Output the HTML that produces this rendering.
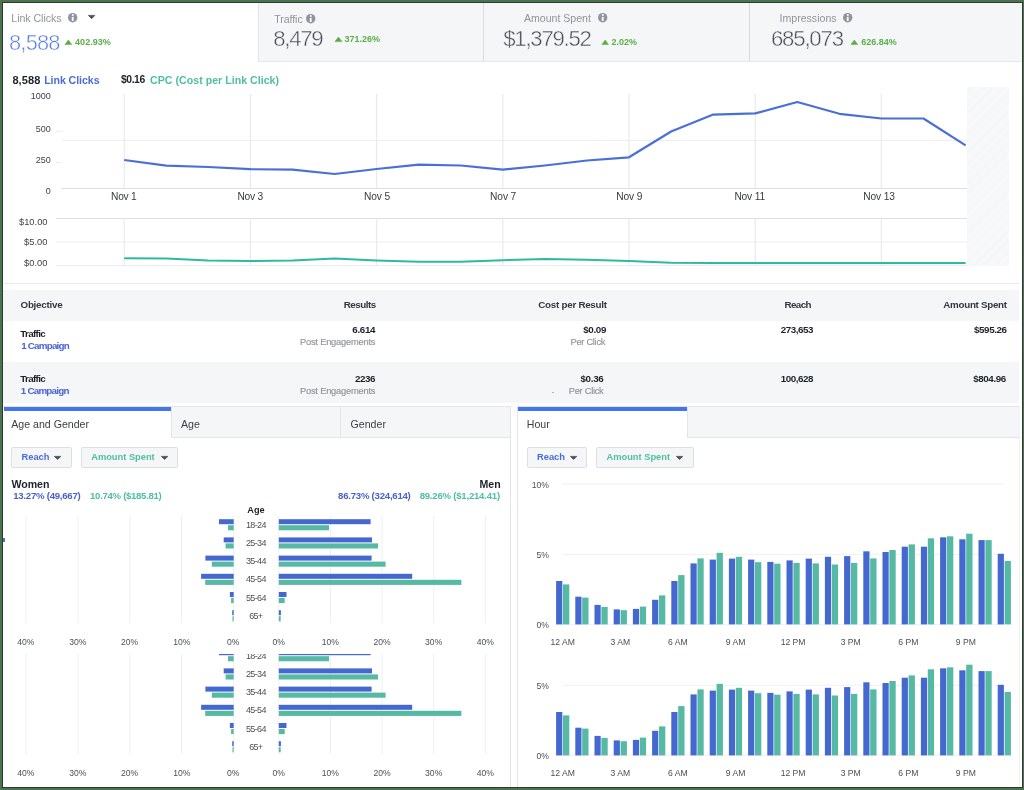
<!DOCTYPE html>
<html><head><meta charset="utf-8"><style>
html,body{margin:0;padding:0;}
body{will-change:transform;width:1024px;height:790px;position:relative;overflow:hidden;background:#4a754c;font-family:"Liberation Sans",sans-serif;}
.t{position:absolute;white-space:nowrap;}
.r{position:absolute;}
</style></head><body>
<div class="r" style="left:2.00px;top:2.00px;width:1021.00px;height:786.00px;background:#353535;"></div>
<div class="r" style="left:3.00px;top:3.00px;width:1019.00px;height:784.00px;background:#ffffff;"></div>
<div class="r" style="left:258.00px;top:3.00px;width:764.00px;height:59.00px;background:#f5f6f7;"></div>
<div class="r" style="left:258.00px;top:3.00px;width:1.00px;height:59.00px;background:#e3e5e8;"></div>
<div class="r" style="left:483.00px;top:3.00px;width:1.00px;height:59.00px;background:#dadcdf;"></div>
<div class="r" style="left:749.00px;top:3.00px;width:1.00px;height:59.00px;background:#d6d8db;"></div>
<div class="r" style="left:258.00px;top:61.00px;width:764.00px;height:1.00px;background:#e6e8eb;"></div>
<div class="t" style="left:11.30px;top:12.73px;font-size:10.6px;line-height:10.6px;color:#90949c;letter-spacing:-0.036px;">Link Clicks</div>
<svg class="r" style="left:66.60px;top:12.10px" width="11.40" height="11.40" viewBox="-5.70 -5.70 11.40 11.40"><circle cx="0" cy="0" r="4.70" fill="#8f959e"/><path d="M-0.9,-0.6 L0.9,-0.9 L0.9,3.2 L-0.9,3.2 Z" fill="#fff"/><circle cx="0.1" cy="-2.6" r="1.0" fill="#fff"/></svg>
<svg class="r" style="left:87.20px;top:14.00px" width="9.20" height="6.10"><polygon points="1.4,1.4 7.80,1.4 4.60,4.70" fill="#4b4f56" stroke="#4b4f56" stroke-width="0.8" stroke-linejoin="round"/></svg>
<div class="t" style="left:9.00px;top:31.75px;font-size:21.8px;line-height:21.8px;color:#5a7fe0;letter-spacing:-0.764px;-webkit-text-stroke:0.45px #fff;">8,588</div>
<svg class="r" style="left:63.50px;top:38.80px" width="8.70" height="6.60"><polygon points="1,5.60 7.70,5.60 4.35,1" fill="#5aae48" stroke="#5aae48" stroke-width="0.6" stroke-linejoin="round"/></svg>
<div class="t" style="left:75.10px;top:37.78px;font-size:9px;line-height:9px;color:#5aae48;font-weight:bold;letter-spacing:0.012px;">402.93%</div>
<div class="t" style="left:274.30px;top:13.83px;font-size:10.6px;line-height:10.6px;color:#90949c;letter-spacing:-0.077px;">Traffic</div>
<svg class="r" style="left:304.70px;top:13.10px" width="11.40" height="11.40" viewBox="-5.70 -5.70 11.40 11.40"><circle cx="0" cy="0" r="4.70" fill="#8f959e"/><path d="M-0.9,-0.6 L0.9,-0.9 L0.9,3.2 L-0.9,3.2 Z" fill="#fff"/><circle cx="0.1" cy="-2.6" r="1.0" fill="#fff"/></svg>
<div class="t" style="left:273.20px;top:27.81px;font-size:22.2px;line-height:22.2px;color:#4b4f56;letter-spacing:-1.264px;-webkit-text-stroke:0.45px #f5f6f7;">8,479</div>
<svg class="r" style="left:334.00px;top:36.00px" width="8.90" height="6.60"><polygon points="1,5.60 7.90,5.60 4.45,1" fill="#5aae48" stroke="#5aae48" stroke-width="0.6" stroke-linejoin="round"/></svg>
<div class="t" style="left:344.40px;top:34.88px;font-size:9px;line-height:9px;color:#5aae48;font-weight:bold;letter-spacing:0.012px;">371.26%</div>
<div class="t" style="left:523.90px;top:12.93px;font-size:10.6px;line-height:10.6px;color:#90949c;letter-spacing:-0.007px;">Amount Spent</div>
<svg class="r" style="left:596.80px;top:12.30px" width="11.40" height="11.40" viewBox="-5.70 -5.70 11.40 11.40"><circle cx="0" cy="0" r="4.70" fill="#8f959e"/><path d="M-0.9,-0.6 L0.9,-0.9 L0.9,3.2 L-0.9,3.2 Z" fill="#fff"/><circle cx="0.1" cy="-2.6" r="1.0" fill="#fff"/></svg>
<div class="t" style="left:503.30px;top:27.81px;font-size:22.2px;line-height:22.2px;color:#4b4f56;letter-spacing:-1.270px;-webkit-text-stroke:0.45px #f5f6f7;">$1,379.52</div>
<svg class="r" style="left:601.00px;top:38.60px" width="8.40" height="6.40"><polygon points="1,5.40 7.40,5.40 4.20,1" fill="#5aae48" stroke="#5aae48" stroke-width="0.6" stroke-linejoin="round"/></svg>
<div class="t" style="left:611.40px;top:38.38px;font-size:9px;line-height:9px;color:#5aae48;font-weight:bold;letter-spacing:-0.005px;">2.02%</div>
<div class="t" style="left:779.50px;top:12.93px;font-size:10.6px;line-height:10.6px;color:#90949c;letter-spacing:-0.004px;">Impressions</div>
<svg class="r" style="left:841.80px;top:12.30px" width="11.40" height="11.40" viewBox="-5.70 -5.70 11.40 11.40"><circle cx="0" cy="0" r="4.70" fill="#8f959e"/><path d="M-0.9,-0.6 L0.9,-0.9 L0.9,3.2 L-0.9,3.2 Z" fill="#fff"/><circle cx="0.1" cy="-2.6" r="1.0" fill="#fff"/></svg>
<div class="t" style="left:770.90px;top:27.81px;font-size:22.2px;line-height:22.2px;color:#4b4f56;letter-spacing:-1.175px;-webkit-text-stroke:0.45px #f5f6f7;">685,073</div>
<svg class="r" style="left:850.00px;top:38.60px" width="8.70" height="6.40"><polygon points="1,5.40 7.70,5.40 4.35,1" fill="#5aae48" stroke="#5aae48" stroke-width="0.6" stroke-linejoin="round"/></svg>
<div class="t" style="left:861.25px;top:38.38px;font-size:9px;line-height:9px;color:#5aae48;font-weight:bold;letter-spacing:-0.013px;">626.84%</div>
<div class="t" style="left:12.40px;top:74.69px;font-size:11px;line-height:11px;color:#1d2129;font-weight:bold;letter-spacing:0.093px;">8,588</div>
<div class="t" style="left:44.20px;top:75.03px;font-size:10.6px;line-height:10.6px;color:#4a6cd8;font-weight:bold;letter-spacing:-0.057px;">Link Clicks</div>
<div class="t" style="left:120.90px;top:75.20px;font-size:10.4px;line-height:10.4px;color:#1d2129;font-weight:bold;letter-spacing:-0.407px;">$0.16</div>
<div class="t" style="left:150.10px;top:75.03px;font-size:10.6px;line-height:10.6px;color:#4fbf9f;font-weight:bold;letter-spacing:0.025px;">CPC (Cost per Link Click)</div>
<svg class="r" style="left:0;top:0" width="1024" height="290"><line x1="56" y1="131.5" x2="61.5" y2="131.5" stroke="#e8ebef" stroke-width="1"/><line x1="56" y1="162.5" x2="61.5" y2="162.5" stroke="#e8ebef" stroke-width="1"/><line x1="62" y1="140.5" x2="967" y2="140.5" stroke="#eceef0" stroke-width="1"/><line x1="62" y1="188.5" x2="967" y2="188.5" stroke="#dcdee1" stroke-width="1"/><line x1="124.2" y1="94" x2="124.2" y2="188" stroke="#e9ebee" stroke-width="1.3"/><line x1="250.4" y1="94" x2="250.4" y2="188" stroke="#e9ebee" stroke-width="1.3"/><line x1="376.6" y1="94" x2="376.6" y2="188" stroke="#e9ebee" stroke-width="1.3"/><line x1="502.8" y1="94" x2="502.8" y2="188" stroke="#e9ebee" stroke-width="1.3"/><line x1="629.0" y1="94" x2="629.0" y2="188" stroke="#e9ebee" stroke-width="1.3"/><line x1="755.2" y1="94" x2="755.2" y2="188" stroke="#e9ebee" stroke-width="1.3"/><line x1="881.4" y1="94" x2="881.4" y2="188" stroke="#e9ebee" stroke-width="1.3"/><line x1="56" y1="218.5" x2="967" y2="218.5" stroke="#dcdee1" stroke-width="1"/><line x1="56" y1="242.0" x2="967" y2="242.0" stroke="#eceef0" stroke-width="1"/><line x1="56" y1="265.5" x2="967" y2="265.5" stroke="#eceef0" stroke-width="1"/><line x1="124.2" y1="218" x2="124.2" y2="265" stroke="#e9ebee" stroke-width="1.3"/><line x1="250.4" y1="218" x2="250.4" y2="265" stroke="#e9ebee" stroke-width="1.3"/><line x1="376.6" y1="218" x2="376.6" y2="265" stroke="#e9ebee" stroke-width="1.3"/><line x1="502.8" y1="218" x2="502.8" y2="265" stroke="#e9ebee" stroke-width="1.3"/><line x1="629.0" y1="218" x2="629.0" y2="265" stroke="#e9ebee" stroke-width="1.3"/><line x1="755.2" y1="218" x2="755.2" y2="265" stroke="#e9ebee" stroke-width="1.3"/><line x1="881.4" y1="218" x2="881.4" y2="265" stroke="#e9ebee" stroke-width="1.3"/><defs><pattern id="hp" patternUnits="userSpaceOnUse" width="7" height="7" patternTransform="rotate(45)"><rect width="7" height="7" fill="#f7f8f9"/><rect width="2.5" height="7" fill="#f5f6f8"/></pattern></defs><rect x="967" y="87" width="42" height="179" fill="url(#hp)"/><polyline points="124.2,160.0 166.3,165.6 208.3,167.0 250.4,169.2 292.5,169.7 334.6,174.0 376.6,169.0 418.7,164.7 460.8,165.5 502.8,169.6 544.9,165.5 587.0,160.5 629.0,157.3 671.1,131.5 713.2,114.6 755.2,113.4 797.3,102.0 839.4,113.8 881.5,118.5 923.5,118.5 965.6,145.4" fill="none" stroke="#4a6fd8" stroke-width="2.2" stroke-linejoin="round"/><polyline points="124.2,258.2 166.3,258.6 208.3,260.6 250.4,261.0 292.5,260.5 334.6,258.6 376.6,260.5 418.7,261.8 460.8,261.8 502.8,260.2 544.9,259.0 587.0,259.8 629.0,261.0 671.1,262.8 713.2,263.0 755.2,263.0 797.3,263.0 839.4,263.0 881.5,263.0 923.5,263.0 965.6,263.0" fill="none" stroke="#2fb9a0" stroke-width="2" stroke-linejoin="round"/></svg>
<div class="t" style="right:973.20px;top:91.58px;font-size:9px;line-height:9px;color:#3f4248;">1000</div>
<div class="t" style="right:973.20px;top:124.98px;font-size:9px;line-height:9px;color:#3f4248;">500</div>
<div class="t" style="right:973.20px;top:156.28px;font-size:9px;line-height:9px;color:#3f4248;">250</div>
<div class="t" style="right:973.20px;top:186.68px;font-size:9px;line-height:9px;color:#3f4248;">0</div>
<div class="t" style="left:111.00px;top:191.87px;font-size:10.2px;line-height:10.2px;color:#383b41;letter-spacing:-0.211px;">Nov 1</div>
<div class="t" style="left:237.40px;top:191.87px;font-size:10.2px;line-height:10.2px;color:#383b41;letter-spacing:-0.186px;">Nov 3</div>
<div class="t" style="left:364.00px;top:191.87px;font-size:10.2px;line-height:10.2px;color:#383b41;letter-spacing:-0.136px;">Nov 5</div>
<div class="t" style="left:490.10px;top:191.87px;font-size:10.2px;line-height:10.2px;color:#383b41;letter-spacing:-0.111px;">Nov 7</div>
<div class="t" style="left:616.30px;top:191.87px;font-size:10.2px;line-height:10.2px;color:#383b41;letter-spacing:-0.111px;">Nov 9</div>
<div class="t" style="left:734.40px;top:191.87px;font-size:10.2px;line-height:10.2px;color:#383b41;letter-spacing:-0.152px;">Nov 11</div>
<div class="t" style="left:863.30px;top:191.87px;font-size:10.2px;line-height:10.2px;color:#383b41;letter-spacing:-0.144px;">Nov 13</div>
<div class="t" style="right:976.49px;top:218.13px;font-size:9.3px;line-height:9.3px;color:#3f4248;letter-spacing:0.011px;">$10.00</div>
<div class="t" style="right:976.44px;top:238.23px;font-size:9.3px;line-height:9.3px;color:#3f4248;letter-spacing:0.057px;">$5.00</div>
<div class="t" style="right:976.44px;top:258.53px;font-size:9.3px;line-height:9.3px;color:#3f4248;letter-spacing:0.057px;">$0.00</div>
<div class="r" style="left:3.00px;top:283.00px;width:1016.00px;height:1.00px;background:#e9ebee;"></div>
<div class="r" style="left:3.00px;top:289.50px;width:1016.00px;height:31.00px;background:#f5f6f7;"></div>
<div class="r" style="left:3.00px;top:362.40px;width:1016.00px;height:40.60px;background:#f5f6f7;"></div>
<div class="t" style="left:20.50px;top:300.10px;font-size:9.8px;line-height:9.8px;color:#34373c;font-weight:bold;letter-spacing:-0.240px;">Objective</div>
<div class="t" style="right:648.17px;top:300.10px;font-size:9.8px;line-height:9.8px;color:#34373c;font-weight:bold;letter-spacing:-0.467px;">Results</div>
<div class="t" style="right:417.27px;top:300.10px;font-size:9.8px;line-height:9.8px;color:#34373c;font-weight:bold;letter-spacing:-0.266px;">Cost per Result</div>
<div class="t" style="right:213.08px;top:300.10px;font-size:9.8px;line-height:9.8px;color:#34373c;font-weight:bold;letter-spacing:-0.579px;">Reach</div>
<div class="t" style="right:17.30px;top:300.10px;font-size:9.8px;line-height:9.8px;color:#34373c;font-weight:bold;letter-spacing:-0.296px;">Amount Spent</div>
<div class="t" style="left:20.30px;top:328.60px;font-size:9.8px;line-height:9.8px;color:#1d2129;font-weight:bold;letter-spacing:-0.668px;">Traffic</div>
<div class="t" style="left:21.20px;top:340.70px;font-size:9.8px;line-height:9.8px;color:#4b63d3;font-weight:bold;letter-spacing:-0.772px;">1 Campaign</div>
<div class="t" style="right:648.83px;top:324.80px;font-size:9.8px;line-height:9.8px;color:#1d2129;font-weight:bold;letter-spacing:-0.331px;">6.614</div>
<div class="t" style="right:648.70px;top:337.63px;font-size:9.3px;line-height:9.3px;color:#90949c;letter-spacing:-0.199px;-webkit-text-stroke:0.15px #90949c;">Post Engagements</div>
<div class="t" style="right:417.93px;top:324.80px;font-size:9.8px;line-height:9.8px;color:#1d2129;font-weight:bold;letter-spacing:-0.331px;">$0.09</div>
<div class="t" style="right:418.89px;top:337.63px;font-size:9.3px;line-height:9.3px;color:#90949c;letter-spacing:-0.288px;-webkit-text-stroke:0.15px #90949c;">Per Click</div>
<div class="t" style="right:210.95px;top:324.80px;font-size:9.8px;line-height:9.8px;color:#1d2129;font-weight:bold;letter-spacing:-0.454px;">273,653</div>
<div class="t" style="right:17.40px;top:324.80px;font-size:9.8px;line-height:9.8px;color:#1d2129;font-weight:bold;letter-spacing:-0.404px;">$595.26</div>
<div class="t" style="left:20.30px;top:374.00px;font-size:9.8px;line-height:9.8px;color:#1d2129;font-weight:bold;letter-spacing:-0.668px;">Traffic</div>
<div class="t" style="left:20.80px;top:386.40px;font-size:9.8px;line-height:9.8px;color:#4b63d3;font-weight:bold;letter-spacing:-0.772px;">1 Campaign</div>
<div class="t" style="right:648.90px;top:374.00px;font-size:9.8px;line-height:9.8px;color:#1d2129;font-weight:bold;letter-spacing:-0.401px;">2236</div>
<div class="t" style="right:648.70px;top:387.13px;font-size:9.3px;line-height:9.3px;color:#90949c;letter-spacing:-0.199px;-webkit-text-stroke:0.15px #90949c;">Post Engagements</div>
<div class="t" style="right:420.63px;top:374.00px;font-size:9.8px;line-height:9.8px;color:#1d2129;font-weight:bold;letter-spacing:-0.331px;">$0.36</div>
<div class="t" style="right:420.59px;top:387.13px;font-size:9.3px;line-height:9.3px;color:#90949c;letter-spacing:-0.288px;-webkit-text-stroke:0.15px #90949c;">Per Click</div>
<div class="t" style="right:210.95px;top:374.00px;font-size:9.8px;line-height:9.8px;color:#1d2129;font-weight:bold;letter-spacing:-0.454px;">100,628</div>
<div class="t" style="right:18.20px;top:374.00px;font-size:9.8px;line-height:9.8px;color:#1d2129;font-weight:bold;letter-spacing:-0.404px;">$804.96</div>
<div class="r" style="left:552.2px;top:391.6px;width:1.6px;height:1.6px;border-radius:50%;background:#a9adb3;"></div>
<div class="r" style="left:3.00px;top:406.00px;width:508.00px;height:381.00px;background:#e2e4e7;"></div>
<div class="r" style="left:3.00px;top:407.00px;width:507.00px;height:380.00px;background:#ffffff;"></div>
<div class="r" style="left:3.00px;top:538.00px;width:2.00px;height:4.00px;background:#4a6fd6;"></div>
<div class="r" style="left:171.00px;top:406.30px;width:340.00px;height:31.50px;background:#e3e5e8;"></div>
<div class="r" style="left:172.00px;top:407.30px;width:338.00px;height:29.50px;background:#f5f6f7;"></div>
<div class="r" style="left:340.00px;top:407.00px;width:1.00px;height:30.00px;background:#e3e5e8;"></div>
<div class="r" style="left:4.00px;top:406.80px;width:167.30px;height:4.70px;background:#4276ec;"></div>
<div class="t" style="left:11.30px;top:419.33px;font-size:10.6px;line-height:10.6px;color:#3b3e44;">Age and Gender</div>
<div class="t" style="left:181.00px;top:419.03px;font-size:10.6px;line-height:10.6px;color:#3b3e44;">Age</div>
<div class="t" style="left:350.60px;top:419.03px;font-size:10.6px;line-height:10.6px;color:#3b3e44;">Gender</div>
<div class="r" style="left:517.00px;top:406.00px;width:503.00px;height:381.00px;background:#e2e4e7;"></div>
<div class="r" style="left:518.00px;top:407.00px;width:501.00px;height:380.00px;background:#ffffff;"></div>
<div class="r" style="left:1019.00px;top:406.00px;width:1.00px;height:381.00px;background:#f0f1f3;"></div>
<div class="r" style="left:687.00px;top:406.30px;width:332.00px;height:31.50px;background:#e3e5e8;"></div>
<div class="r" style="left:688.00px;top:407.30px;width:331.00px;height:29.50px;background:#f5f6f7;"></div>
<div class="r" style="left:517.50px;top:406.80px;width:169.80px;height:4.70px;background:#4276ec;"></div>
<div class="t" style="left:526.80px;top:419.33px;font-size:10.6px;line-height:10.6px;color:#3b3e44;">Hour</div>
<div class="r" style="left:11.30px;top:447px;width:58.60px;height:19px;background:#f5f6f7;border:1px solid #dddfe2;border-radius:2px;"></div>
<div class="t" style="left:21.50px;top:453.43px;font-size:9.3px;line-height:9.3px;color:#4a6cd8;font-weight:bold;">Reach</div>
<svg class="r" style="left:53.30px;top:454.80px" width="9.20" height="5.80"><polygon points="1.4,1.4 7.80,1.4 4.60,4.40" fill="#4b4f56" stroke="#4b4f56" stroke-width="0.8" stroke-linejoin="round"/></svg>
<div class="r" style="left:81.00px;top:447px;width:95.30px;height:19px;background:#f5f6f7;border:1px solid #dddfe2;border-radius:2px;"></div>
<div class="t" style="left:91.20px;top:453.43px;font-size:9.3px;line-height:9.3px;color:#4fbf9f;font-weight:bold;">Amount Spent</div>
<svg class="r" style="left:160.00px;top:454.80px" width="9.20" height="5.80"><polygon points="1.4,1.4 7.80,1.4 4.60,4.40" fill="#4b4f56" stroke="#4b4f56" stroke-width="0.8" stroke-linejoin="round"/></svg>
<div class="r" style="left:526.80px;top:447px;width:58.70px;height:19px;background:#f5f6f7;border:1px solid #dddfe2;border-radius:2px;"></div>
<div class="t" style="left:537.00px;top:453.43px;font-size:9.3px;line-height:9.3px;color:#4a6cd8;font-weight:bold;">Reach</div>
<svg class="r" style="left:568.80px;top:454.80px" width="9.20" height="5.80"><polygon points="1.4,1.4 7.80,1.4 4.60,4.40" fill="#4b4f56" stroke="#4b4f56" stroke-width="0.8" stroke-linejoin="round"/></svg>
<div class="r" style="left:596.30px;top:447px;width:95.30px;height:19px;background:#f5f6f7;border:1px solid #dddfe2;border-radius:2px;"></div>
<div class="t" style="left:606.50px;top:453.43px;font-size:9.3px;line-height:9.3px;color:#4fbf9f;font-weight:bold;">Amount Spent</div>
<svg class="r" style="left:675.30px;top:454.80px" width="9.20" height="5.80"><polygon points="1.4,1.4 7.80,1.4 4.60,4.40" fill="#4b4f56" stroke="#4b4f56" stroke-width="0.8" stroke-linejoin="round"/></svg>
<div class="t" style="left:11.40px;top:478.83px;font-size:10.6px;line-height:10.6px;color:#1d2129;font-weight:bold;">Women</div>
<div class="t" style="left:13.20px;top:491.47px;font-size:9.6px;line-height:9.6px;color:#4a5fc8;font-weight:bold;letter-spacing:-0.242px;">13.27% (49,667)</div>
<div class="t" style="left:90.10px;top:491.47px;font-size:9.6px;line-height:9.6px;color:#4fbf9f;font-weight:bold;letter-spacing:-0.308px;">10.74% ($185.81)</div>
<div class="t" style="right:523.30px;top:478.73px;font-size:10.6px;line-height:10.6px;color:#1d2129;font-weight:bold;">Men</div>
<div class="t" style="right:613.43px;top:491.47px;font-size:9.6px;line-height:9.6px;color:#4a5fc8;font-weight:bold;letter-spacing:-0.235px;">86.73% (324,614)</div>
<div class="t" style="right:524.13px;top:491.47px;font-size:9.6px;line-height:9.6px;color:#4fbf9f;font-weight:bold;letter-spacing:-0.225px;">89.26% ($1,214.41)</div>
<div class="r" style="left:0;top:0;width:1024px;height:654px;overflow:hidden;">
<svg class="r" style="left:0;top:0" width="520" height="790"><rect x="25.50" y="516.00" width="1" height="107" fill="#eef0f2"/><rect x="77.50" y="516.00" width="1" height="107" fill="#eef0f2"/><rect x="129.30" y="516.00" width="1" height="107" fill="#eef0f2"/><rect x="181.10" y="516.00" width="1" height="107" fill="#eef0f2"/><rect x="233.20" y="516.00" width="1" height="107" fill="#eef0f2"/><rect x="278.20" y="516.00" width="1" height="107" fill="#eef0f2"/><rect x="329.90" y="516.00" width="1" height="107" fill="#eef0f2"/><rect x="381.50" y="516.00" width="1" height="107" fill="#eef0f2"/><rect x="433.20" y="516.00" width="1" height="107" fill="#eef0f2"/><rect x="484.90" y="516.00" width="1" height="107" fill="#eef0f2"/><rect x="219.00" y="519.20" width="14.70" height="5.0" fill="#4468d0"/><rect x="228.00" y="525.20" width="5.70" height="5.1" fill="#55b9a3"/><rect x="278.8" y="519.20" width="91.80" height="5.0" fill="#4468d0"/><rect x="278.8" y="525.20" width="50.20" height="5.1" fill="#55b9a3"/><rect x="223.70" y="537.40" width="10.00" height="5.0" fill="#4468d0"/><rect x="225.60" y="543.40" width="8.10" height="5.1" fill="#55b9a3"/><rect x="278.8" y="537.40" width="93.20" height="5.0" fill="#4468d0"/><rect x="278.8" y="543.40" width="99.20" height="5.1" fill="#55b9a3"/><rect x="205.40" y="555.60" width="28.30" height="5.0" fill="#4468d0"/><rect x="211.80" y="561.60" width="21.90" height="5.1" fill="#55b9a3"/><rect x="278.8" y="555.60" width="92.80" height="5.0" fill="#4468d0"/><rect x="278.8" y="561.60" width="106.80" height="5.1" fill="#55b9a3"/><rect x="201.10" y="573.80" width="32.60" height="5.0" fill="#4468d0"/><rect x="205.20" y="579.80" width="28.50" height="5.1" fill="#55b9a3"/><rect x="278.8" y="573.80" width="133.40" height="5.0" fill="#4468d0"/><rect x="278.8" y="579.80" width="182.60" height="5.1" fill="#55b9a3"/><rect x="229.90" y="592.00" width="3.80" height="5.0" fill="#4468d0"/><rect x="231.10" y="598.00" width="2.60" height="5.1" fill="#55b9a3"/><rect x="278.8" y="592.00" width="7.70" height="5.0" fill="#4468d0"/><rect x="278.8" y="598.00" width="5.90" height="5.1" fill="#55b9a3"/><rect x="232.20" y="610.20" width="1.50" height="5.0" fill="#4468d0"/><rect x="232.50" y="616.20" width="1.20" height="5.1" fill="#55b9a3"/><rect x="278.8" y="610.20" width="2.10" height="5.0" fill="#4468d0"/><rect x="278.8" y="616.20" width="1.90" height="5.1" fill="#55b9a3"/></svg>
<div class="t" style="left:215.90px;width:80px;text-align:center;top:520.88px;font-size:9px;line-height:9px;color:#4b4f56;letter-spacing:-0.605px;">18-24</div>
<div class="t" style="left:215.90px;width:80px;text-align:center;top:539.08px;font-size:9px;line-height:9px;color:#4b4f56;letter-spacing:-0.605px;">25-34</div>
<div class="t" style="left:215.90px;width:80px;text-align:center;top:557.28px;font-size:9px;line-height:9px;color:#4b4f56;letter-spacing:-0.605px;">35-44</div>
<div class="t" style="left:215.90px;width:80px;text-align:center;top:575.48px;font-size:9px;line-height:9px;color:#4b4f56;letter-spacing:-0.605px;">45-54</div>
<div class="t" style="left:215.90px;width:80px;text-align:center;top:593.68px;font-size:9px;line-height:9px;color:#4b4f56;letter-spacing:-0.605px;">55-64</div>
<div class="t" style="left:215.83px;width:80px;text-align:center;top:611.88px;font-size:9px;line-height:9px;color:#4b4f56;letter-spacing:-0.733px;">65+</div>
<div class="t" style="left:216.00px;width:80px;text-align:center;top:506.21px;font-size:9.2px;line-height:9.2px;color:#1d2129;font-weight:bold;">Age</div>
<div class="t" style="left:-4.20px;width:60px;text-align:center;top:637.68px;font-size:8.6px;line-height:9px;color:#4b4f56;">40%</div>
<div class="t" style="left:47.90px;width:60px;text-align:center;top:637.68px;font-size:8.6px;line-height:9px;color:#4b4f56;">30%</div>
<div class="t" style="left:99.60px;width:60px;text-align:center;top:637.68px;font-size:8.6px;line-height:9px;color:#4b4f56;">20%</div>
<div class="t" style="left:151.90px;width:60px;text-align:center;top:637.68px;font-size:8.6px;line-height:9px;color:#4b4f56;">10%</div>
<div class="t" style="left:203.30px;width:60px;text-align:center;top:637.68px;font-size:8.6px;line-height:9px;color:#4b4f56;">0%</div>
<div class="t" style="left:248.60px;width:60px;text-align:center;top:637.68px;font-size:8.6px;line-height:9px;color:#4b4f56;">0%</div>
<div class="t" style="left:300.40px;width:60px;text-align:center;top:637.68px;font-size:8.6px;line-height:9px;color:#4b4f56;">10%</div>
<div class="t" style="left:352.00px;width:60px;text-align:center;top:637.68px;font-size:8.6px;line-height:9px;color:#4b4f56;">20%</div>
<div class="t" style="left:403.70px;width:60px;text-align:center;top:637.68px;font-size:8.6px;line-height:9px;color:#4b4f56;">30%</div>
<div class="t" style="left:455.40px;width:60px;text-align:center;top:637.68px;font-size:8.6px;line-height:9px;color:#4b4f56;">40%</div>
<svg class="r" style="left:0;top:0" width="1024" height="790"><rect x="562.7" y="483.50" width="441" height="1" fill="#eef0f2"/><rect x="562.7" y="553.80" width="441" height="1" fill="#eef0f2"/><rect x="556" y="623.80" width="448" height="1" fill="#eef0f2"/><rect x="556.10" y="581.00" width="6.2" height="43.40" fill="#4468d0"/><rect x="563.00" y="584.40" width="6.3" height="40.00" fill="#55b9a3"/><rect x="575.30" y="596.70" width="6.2" height="27.70" fill="#4468d0"/><rect x="582.20" y="597.60" width="6.3" height="26.80" fill="#55b9a3"/><rect x="594.50" y="604.90" width="6.2" height="19.50" fill="#4468d0"/><rect x="601.40" y="606.90" width="6.3" height="17.50" fill="#55b9a3"/><rect x="613.70" y="609.40" width="6.2" height="15.00" fill="#4468d0"/><rect x="620.60" y="610.20" width="6.3" height="14.20" fill="#55b9a3"/><rect x="632.90" y="608.90" width="6.2" height="15.50" fill="#4468d0"/><rect x="639.80" y="606.60" width="6.3" height="17.80" fill="#55b9a3"/><rect x="652.10" y="599.80" width="6.2" height="24.60" fill="#4468d0"/><rect x="659.00" y="595.40" width="6.3" height="29.00" fill="#55b9a3"/><rect x="671.30" y="581.00" width="6.2" height="43.40" fill="#4468d0"/><rect x="678.20" y="575.10" width="6.3" height="49.30" fill="#55b9a3"/><rect x="690.50" y="563.40" width="6.2" height="61.00" fill="#4468d0"/><rect x="697.40" y="558.40" width="6.3" height="66.00" fill="#55b9a3"/><rect x="709.70" y="559.60" width="6.2" height="64.80" fill="#4468d0"/><rect x="716.60" y="552.80" width="6.3" height="71.60" fill="#55b9a3"/><rect x="728.90" y="558.60" width="6.2" height="65.80" fill="#4468d0"/><rect x="735.80" y="556.80" width="6.3" height="67.60" fill="#55b9a3"/><rect x="748.10" y="559.60" width="6.2" height="64.80" fill="#4468d0"/><rect x="755.00" y="562.20" width="6.3" height="62.20" fill="#55b9a3"/><rect x="767.30" y="561.90" width="6.2" height="62.50" fill="#4468d0"/><rect x="774.20" y="563.70" width="6.3" height="60.70" fill="#55b9a3"/><rect x="786.50" y="560.40" width="6.2" height="64.00" fill="#4468d0"/><rect x="793.40" y="562.90" width="6.3" height="61.50" fill="#55b9a3"/><rect x="805.70" y="558.60" width="6.2" height="65.80" fill="#4468d0"/><rect x="812.60" y="563.40" width="6.3" height="61.00" fill="#55b9a3"/><rect x="824.90" y="556.80" width="6.2" height="67.60" fill="#4468d0"/><rect x="831.80" y="564.50" width="6.3" height="59.90" fill="#55b9a3"/><rect x="844.10" y="556.10" width="6.2" height="68.30" fill="#4468d0"/><rect x="851.00" y="562.90" width="6.3" height="61.50" fill="#55b9a3"/><rect x="863.30" y="551.30" width="6.2" height="73.10" fill="#4468d0"/><rect x="870.20" y="558.40" width="6.3" height="66.00" fill="#55b9a3"/><rect x="882.50" y="552.00" width="6.2" height="72.40" fill="#4468d0"/><rect x="889.40" y="550.00" width="6.3" height="74.40" fill="#55b9a3"/><rect x="901.70" y="546.70" width="6.2" height="77.70" fill="#4468d0"/><rect x="908.60" y="544.40" width="6.3" height="80.00" fill="#55b9a3"/><rect x="920.90" y="546.70" width="6.2" height="77.70" fill="#4468d0"/><rect x="927.80" y="538.30" width="6.3" height="86.10" fill="#55b9a3"/><rect x="940.10" y="537.30" width="6.2" height="87.10" fill="#4468d0"/><rect x="947.00" y="536.30" width="6.3" height="88.10" fill="#55b9a3"/><rect x="959.30" y="539.30" width="6.2" height="85.10" fill="#4468d0"/><rect x="966.20" y="533.70" width="6.3" height="90.70" fill="#55b9a3"/><rect x="978.50" y="540.10" width="6.2" height="84.30" fill="#4468d0"/><rect x="985.40" y="540.10" width="6.3" height="84.30" fill="#55b9a3"/><rect x="997.70" y="553.80" width="6.2" height="70.60" fill="#4468d0"/><rect x="1004.60" y="560.90" width="6.3" height="63.50" fill="#55b9a3"/></svg>
<div class="t" style="right:475.00px;top:480.68px;font-size:8.6px;line-height:9px;color:#4b4f56;">10%</div>
<div class="t" style="right:475.00px;top:550.98px;font-size:8.6px;line-height:9px;color:#4b4f56;">5%</div>
<div class="t" style="right:475.00px;top:620.78px;font-size:8.6px;line-height:9px;color:#4b4f56;">0%</div>
<div class="t" style="left:532.70px;width:60px;text-align:center;top:637.88px;font-size:8.6px;line-height:9px;color:#4b4f56;">12 AM</div>
<div class="t" style="left:590.30px;width:60px;text-align:center;top:637.88px;font-size:8.6px;line-height:9px;color:#4b4f56;">3 AM</div>
<div class="t" style="left:647.90px;width:60px;text-align:center;top:637.88px;font-size:8.6px;line-height:9px;color:#4b4f56;">6 AM</div>
<div class="t" style="left:705.50px;width:60px;text-align:center;top:637.88px;font-size:8.6px;line-height:9px;color:#4b4f56;">9 AM</div>
<div class="t" style="left:763.10px;width:60px;text-align:center;top:637.88px;font-size:8.6px;line-height:9px;color:#4b4f56;">12 PM</div>
<div class="t" style="left:820.70px;width:60px;text-align:center;top:637.88px;font-size:8.6px;line-height:9px;color:#4b4f56;">3 PM</div>
<div class="t" style="left:878.30px;width:60px;text-align:center;top:637.88px;font-size:8.6px;line-height:9px;color:#4b4f56;">6 PM</div>
<div class="t" style="left:935.90px;width:60px;text-align:center;top:637.88px;font-size:8.6px;line-height:9px;color:#4b4f56;">9 PM</div>
</div>
<div class="r" style="left:0;top:654px;width:1024px;height:133px;overflow:hidden;"><div class="r" style="left:0;top:-654px;width:1024px;height:790px;">
<svg class="r" style="left:0;top:0" width="520" height="790"><rect x="25.50" y="647.00" width="1" height="107" fill="#eef0f2"/><rect x="77.50" y="647.00" width="1" height="107" fill="#eef0f2"/><rect x="129.30" y="647.00" width="1" height="107" fill="#eef0f2"/><rect x="181.10" y="647.00" width="1" height="107" fill="#eef0f2"/><rect x="233.20" y="647.00" width="1" height="107" fill="#eef0f2"/><rect x="278.20" y="647.00" width="1" height="107" fill="#eef0f2"/><rect x="329.90" y="647.00" width="1" height="107" fill="#eef0f2"/><rect x="381.50" y="647.00" width="1" height="107" fill="#eef0f2"/><rect x="433.20" y="647.00" width="1" height="107" fill="#eef0f2"/><rect x="484.90" y="647.00" width="1" height="107" fill="#eef0f2"/><rect x="219.00" y="650.20" width="14.70" height="5.0" fill="#4468d0"/><rect x="228.00" y="656.20" width="5.70" height="5.1" fill="#55b9a3"/><rect x="278.8" y="650.20" width="91.80" height="5.0" fill="#4468d0"/><rect x="278.8" y="656.20" width="50.20" height="5.1" fill="#55b9a3"/><rect x="223.70" y="668.40" width="10.00" height="5.0" fill="#4468d0"/><rect x="225.60" y="674.40" width="8.10" height="5.1" fill="#55b9a3"/><rect x="278.8" y="668.40" width="93.20" height="5.0" fill="#4468d0"/><rect x="278.8" y="674.40" width="99.20" height="5.1" fill="#55b9a3"/><rect x="205.40" y="686.60" width="28.30" height="5.0" fill="#4468d0"/><rect x="211.80" y="692.60" width="21.90" height="5.1" fill="#55b9a3"/><rect x="278.8" y="686.60" width="92.80" height="5.0" fill="#4468d0"/><rect x="278.8" y="692.60" width="106.80" height="5.1" fill="#55b9a3"/><rect x="201.10" y="704.80" width="32.60" height="5.0" fill="#4468d0"/><rect x="205.20" y="710.80" width="28.50" height="5.1" fill="#55b9a3"/><rect x="278.8" y="704.80" width="133.40" height="5.0" fill="#4468d0"/><rect x="278.8" y="710.80" width="182.60" height="5.1" fill="#55b9a3"/><rect x="229.90" y="723.00" width="3.80" height="5.0" fill="#4468d0"/><rect x="231.10" y="729.00" width="2.60" height="5.1" fill="#55b9a3"/><rect x="278.8" y="723.00" width="7.70" height="5.0" fill="#4468d0"/><rect x="278.8" y="729.00" width="5.90" height="5.1" fill="#55b9a3"/><rect x="232.20" y="741.20" width="1.50" height="5.0" fill="#4468d0"/><rect x="232.50" y="747.20" width="1.20" height="5.1" fill="#55b9a3"/><rect x="278.8" y="741.20" width="2.10" height="5.0" fill="#4468d0"/><rect x="278.8" y="747.20" width="1.90" height="5.1" fill="#55b9a3"/></svg>
<div class="t" style="left:215.90px;width:80px;text-align:center;top:651.88px;font-size:9px;line-height:9px;color:#4b4f56;letter-spacing:-0.605px;">18-24</div>
<div class="t" style="left:215.90px;width:80px;text-align:center;top:670.08px;font-size:9px;line-height:9px;color:#4b4f56;letter-spacing:-0.605px;">25-34</div>
<div class="t" style="left:215.90px;width:80px;text-align:center;top:688.28px;font-size:9px;line-height:9px;color:#4b4f56;letter-spacing:-0.605px;">35-44</div>
<div class="t" style="left:215.90px;width:80px;text-align:center;top:706.48px;font-size:9px;line-height:9px;color:#4b4f56;letter-spacing:-0.605px;">45-54</div>
<div class="t" style="left:215.90px;width:80px;text-align:center;top:724.68px;font-size:9px;line-height:9px;color:#4b4f56;letter-spacing:-0.605px;">55-64</div>
<div class="t" style="left:215.83px;width:80px;text-align:center;top:742.88px;font-size:9px;line-height:9px;color:#4b4f56;letter-spacing:-0.733px;">65+</div>
<div class="t" style="left:216.00px;width:80px;text-align:center;top:637.21px;font-size:9.2px;line-height:9.2px;color:#1d2129;font-weight:bold;">Age</div>
<div class="t" style="left:-4.20px;width:60px;text-align:center;top:768.68px;font-size:8.6px;line-height:9px;color:#4b4f56;">40%</div>
<div class="t" style="left:47.90px;width:60px;text-align:center;top:768.68px;font-size:8.6px;line-height:9px;color:#4b4f56;">30%</div>
<div class="t" style="left:99.60px;width:60px;text-align:center;top:768.68px;font-size:8.6px;line-height:9px;color:#4b4f56;">20%</div>
<div class="t" style="left:151.90px;width:60px;text-align:center;top:768.68px;font-size:8.6px;line-height:9px;color:#4b4f56;">10%</div>
<div class="t" style="left:203.30px;width:60px;text-align:center;top:768.68px;font-size:8.6px;line-height:9px;color:#4b4f56;">0%</div>
<div class="t" style="left:248.60px;width:60px;text-align:center;top:768.68px;font-size:8.6px;line-height:9px;color:#4b4f56;">0%</div>
<div class="t" style="left:300.40px;width:60px;text-align:center;top:768.68px;font-size:8.6px;line-height:9px;color:#4b4f56;">10%</div>
<div class="t" style="left:352.00px;width:60px;text-align:center;top:768.68px;font-size:8.6px;line-height:9px;color:#4b4f56;">20%</div>
<div class="t" style="left:403.70px;width:60px;text-align:center;top:768.68px;font-size:8.6px;line-height:9px;color:#4b4f56;">30%</div>
<div class="t" style="left:455.40px;width:60px;text-align:center;top:768.68px;font-size:8.6px;line-height:9px;color:#4b4f56;">40%</div>
<svg class="r" style="left:0;top:0" width="1024" height="790"><rect x="562.7" y="614.50" width="441" height="1" fill="#eef0f2"/><rect x="562.7" y="684.80" width="441" height="1" fill="#eef0f2"/><rect x="556" y="754.80" width="448" height="1" fill="#eef0f2"/><rect x="556.10" y="712.00" width="6.2" height="43.40" fill="#4468d0"/><rect x="563.00" y="715.40" width="6.3" height="40.00" fill="#55b9a3"/><rect x="575.30" y="727.70" width="6.2" height="27.70" fill="#4468d0"/><rect x="582.20" y="728.60" width="6.3" height="26.80" fill="#55b9a3"/><rect x="594.50" y="735.90" width="6.2" height="19.50" fill="#4468d0"/><rect x="601.40" y="737.90" width="6.3" height="17.50" fill="#55b9a3"/><rect x="613.70" y="740.40" width="6.2" height="15.00" fill="#4468d0"/><rect x="620.60" y="741.20" width="6.3" height="14.20" fill="#55b9a3"/><rect x="632.90" y="739.90" width="6.2" height="15.50" fill="#4468d0"/><rect x="639.80" y="737.60" width="6.3" height="17.80" fill="#55b9a3"/><rect x="652.10" y="730.80" width="6.2" height="24.60" fill="#4468d0"/><rect x="659.00" y="726.40" width="6.3" height="29.00" fill="#55b9a3"/><rect x="671.30" y="712.00" width="6.2" height="43.40" fill="#4468d0"/><rect x="678.20" y="706.10" width="6.3" height="49.30" fill="#55b9a3"/><rect x="690.50" y="694.40" width="6.2" height="61.00" fill="#4468d0"/><rect x="697.40" y="689.40" width="6.3" height="66.00" fill="#55b9a3"/><rect x="709.70" y="690.60" width="6.2" height="64.80" fill="#4468d0"/><rect x="716.60" y="683.80" width="6.3" height="71.60" fill="#55b9a3"/><rect x="728.90" y="689.60" width="6.2" height="65.80" fill="#4468d0"/><rect x="735.80" y="687.80" width="6.3" height="67.60" fill="#55b9a3"/><rect x="748.10" y="690.60" width="6.2" height="64.80" fill="#4468d0"/><rect x="755.00" y="693.20" width="6.3" height="62.20" fill="#55b9a3"/><rect x="767.30" y="692.90" width="6.2" height="62.50" fill="#4468d0"/><rect x="774.20" y="694.70" width="6.3" height="60.70" fill="#55b9a3"/><rect x="786.50" y="691.40" width="6.2" height="64.00" fill="#4468d0"/><rect x="793.40" y="693.90" width="6.3" height="61.50" fill="#55b9a3"/><rect x="805.70" y="689.60" width="6.2" height="65.80" fill="#4468d0"/><rect x="812.60" y="694.40" width="6.3" height="61.00" fill="#55b9a3"/><rect x="824.90" y="687.80" width="6.2" height="67.60" fill="#4468d0"/><rect x="831.80" y="695.50" width="6.3" height="59.90" fill="#55b9a3"/><rect x="844.10" y="687.10" width="6.2" height="68.30" fill="#4468d0"/><rect x="851.00" y="693.90" width="6.3" height="61.50" fill="#55b9a3"/><rect x="863.30" y="682.30" width="6.2" height="73.10" fill="#4468d0"/><rect x="870.20" y="689.40" width="6.3" height="66.00" fill="#55b9a3"/><rect x="882.50" y="683.00" width="6.2" height="72.40" fill="#4468d0"/><rect x="889.40" y="681.00" width="6.3" height="74.40" fill="#55b9a3"/><rect x="901.70" y="677.70" width="6.2" height="77.70" fill="#4468d0"/><rect x="908.60" y="675.40" width="6.3" height="80.00" fill="#55b9a3"/><rect x="920.90" y="677.70" width="6.2" height="77.70" fill="#4468d0"/><rect x="927.80" y="669.30" width="6.3" height="86.10" fill="#55b9a3"/><rect x="940.10" y="668.30" width="6.2" height="87.10" fill="#4468d0"/><rect x="947.00" y="667.30" width="6.3" height="88.10" fill="#55b9a3"/><rect x="959.30" y="670.30" width="6.2" height="85.10" fill="#4468d0"/><rect x="966.20" y="664.70" width="6.3" height="90.70" fill="#55b9a3"/><rect x="978.50" y="671.10" width="6.2" height="84.30" fill="#4468d0"/><rect x="985.40" y="671.10" width="6.3" height="84.30" fill="#55b9a3"/><rect x="997.70" y="684.80" width="6.2" height="70.60" fill="#4468d0"/><rect x="1004.60" y="691.90" width="6.3" height="63.50" fill="#55b9a3"/></svg>
<div class="t" style="right:475.00px;top:611.68px;font-size:8.6px;line-height:9px;color:#4b4f56;">10%</div>
<div class="t" style="right:475.00px;top:681.98px;font-size:8.6px;line-height:9px;color:#4b4f56;">5%</div>
<div class="t" style="right:475.00px;top:751.78px;font-size:8.6px;line-height:9px;color:#4b4f56;">0%</div>
<div class="t" style="left:532.70px;width:60px;text-align:center;top:768.88px;font-size:8.6px;line-height:9px;color:#4b4f56;">12 AM</div>
<div class="t" style="left:590.30px;width:60px;text-align:center;top:768.88px;font-size:8.6px;line-height:9px;color:#4b4f56;">3 AM</div>
<div class="t" style="left:647.90px;width:60px;text-align:center;top:768.88px;font-size:8.6px;line-height:9px;color:#4b4f56;">6 AM</div>
<div class="t" style="left:705.50px;width:60px;text-align:center;top:768.88px;font-size:8.6px;line-height:9px;color:#4b4f56;">9 AM</div>
<div class="t" style="left:763.10px;width:60px;text-align:center;top:768.88px;font-size:8.6px;line-height:9px;color:#4b4f56;">12 PM</div>
<div class="t" style="left:820.70px;width:60px;text-align:center;top:768.88px;font-size:8.6px;line-height:9px;color:#4b4f56;">3 PM</div>
<div class="t" style="left:878.30px;width:60px;text-align:center;top:768.88px;font-size:8.6px;line-height:9px;color:#4b4f56;">6 PM</div>
<div class="t" style="left:935.90px;width:60px;text-align:center;top:768.88px;font-size:8.6px;line-height:9px;color:#4b4f56;">9 PM</div>
</div></div>
</body></html>
